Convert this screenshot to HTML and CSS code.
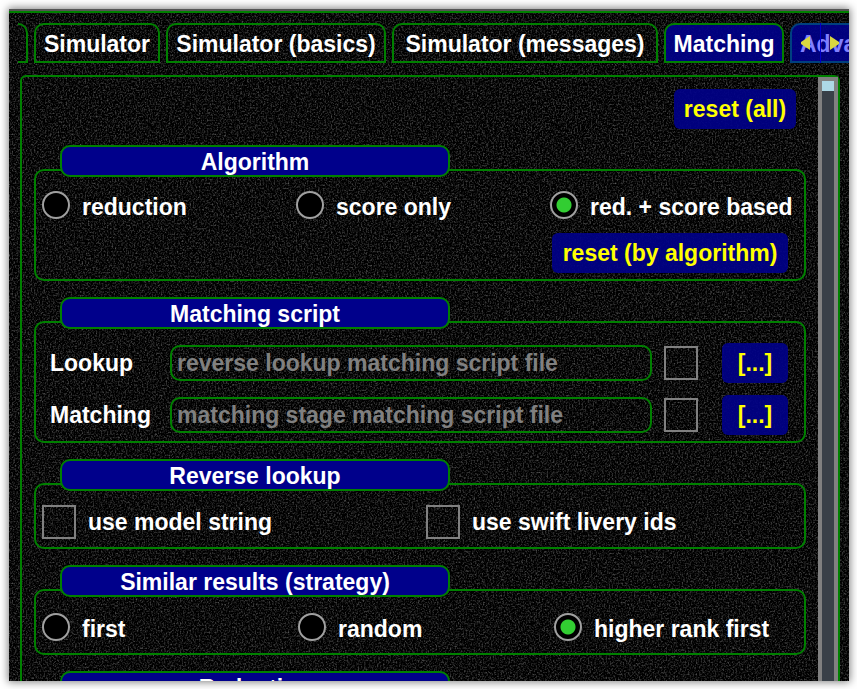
FILE: index.html
```
<!DOCTYPE html>
<html lang="en">
<head>
<meta charset="utf-8">
<title>Matching settings</title>
<link rel="stylesheet" href="styles.css">
</head>
<body>
<main class="window">
  <svg class="texture" aria-hidden="true">
    <filter id="grain" x="0" y="0" width="100%" height="100%" color-interpolation-filters="sRGB">
      <feTurbulence type="fractalNoise" baseFrequency="0.63 0.57" numOctaves="3" seed="4"/>
      <feColorMatrix values="0.7 0 0 0 -0.31  0.7 0 0 0 -0.31  0.7 0 0 0 -0.31  0 0 0 0 1"/>
    </filter>
    <rect width="100%" height="100%" filter="url(#grain)"/>
  </svg>
  <nav class="tabs">
    <span class="tab stub"></span>
    <button class="tab">Simulator</button>
    <button class="tab">Simulator (basics)</button>
    <button class="tab">Simulator (messages)</button>
    <button class="tab active">Matching</button>
    <button class="tab next">Advanced</button>
    <div class="scrollers">
      <button aria-label="Scroll tabs left"><svg viewBox="0 0 9 14"><path d="M9 0V14L0 8V6Z"/></svg></button>
      <button aria-label="Scroll tabs right"><svg viewBox="0 0 9 14"><path d="M0 0V14L9 8V6Z"/></svg></button>
    </div>
  </nav>
  <div class="panel">
    <div class="content">
      <div class="toolbar"><button class="btn">reset (all)</button></div>

      <section class="group">
        <h2>Algorithm</h2>
        <div class="box">
          <div class="options three">
            <label><input type="radio" name="algorithm">reduction</label>
            <label><input type="radio" name="algorithm">score only</label>
            <label><input type="radio" name="algorithm" checked>red. + score based</label>
          </div>
          <div class="actions"><button class="btn">reset (by algorithm)</button></div>
        </div>
      </section>

      <section class="group">
        <h2>Matching script</h2>
        <div class="box scripts">
          <div class="script">
            <label for="lookup">Lookup</label>
            <input type="text" id="lookup" placeholder="reverse lookup matching script file">
            <input type="checkbox" aria-label="Use lookup script">
            <button class="btn">[...]</button>
          </div>
          <div class="script">
            <label for="matching">Matching</label>
            <input type="text" id="matching" placeholder="matching stage matching script file">
            <input type="checkbox" aria-label="Use matching script">
            <button class="btn">[...]</button>
          </div>
        </div>
      </section>

      <section class="group">
        <h2>Reverse lookup</h2>
        <div class="box">
          <div class="options two">
            <label><input type="checkbox">use model string</label>
            <label><input type="checkbox">use swift livery ids</label>
          </div>
        </div>
      </section>

      <section class="group">
        <h2>Similar results (strategy)</h2>
        <div class="box">
          <div class="options strategy">
            <label><input type="radio" name="strategy">first</label>
            <label><input type="radio" name="strategy">random</label>
            <label><input type="radio" name="strategy" checked>higher rank first</label>
          </div>
        </div>
      </section>

      <section class="group">
        <h2>Reduction</h2>
        <div class="box"></div>
      </section>
    </div>
    <div class="scrollbar"><div class="thumb"></div></div>
  </div>
</main>
</body>
</html>
```
FILE: styles.css
```
* { box-sizing: border-box; }

body {
  margin: 0;
  height: 100vh;
  padding: 9px 8px 8px 9px;
  background: #fff;
  color: #fff;
  font: bold 23px/30px "Liberation Sans", Arial, sans-serif;
  overflow: hidden;
}

button, input {
  font: inherit;
  color: inherit;
  margin: 0;
}

.window {
  position: relative;
  isolation: isolate;
  display: flex;
  flex-direction: column;
  height: 100%;
  padding-top: 10px;
  border-top: 2px solid #555;
  background: #080808;
  box-shadow: 0 0 8px 1px rgba(0, 0, 0, 0.5);
}

.window::before {
  content: "";
  position: absolute;
  inset: 0 0 auto;
  height: 2px;
  background: #008000;
}

.texture {
  position: absolute;
  inset: 0;
  z-index: -1;
  width: 100%;
  height: 100%;
}

.tabs {
  position: relative;
  display: grid;
  grid-template-columns: 10px 126px 220px 266px 120px 126px;
  gap: 6px;
  flex: none;
  height: 40px;
  margin: 2px 0 12px 9px;
  overflow: hidden;
}

.tab {
  padding: 2px 0 0;
  border: 2px solid #008000;
  border-radius: 10px 10px 0 0;
  background: none;
  white-space: nowrap;
}

.tab.stub {
  border-left: 0;
  border-top-left-radius: 0;
}

.tab.active { background: rgba(0, 0, 139, 0.9); }

.tab.next {
  padding-left: 8px;
  border-color: #004080;
  background: rgba(0, 0, 139, 0.9);
  color: #8080ff;
  text-align: left;
}

.scrollers {
  position: absolute;
  inset: 0 0 0 auto;
  display: flex;
  width: 58px;
}

.scrollers button {
  flex: 1;
  display: grid;
  place-items: center;
  padding: 0;
  border: 0;
  background: none;
}

.scrollers button + button { border-left: 1px solid #0000c8; }

.scrollers svg {
  width: 9px;
  height: 14px;
  fill: #d8d840;
}

.panel {
  display: flex;
  flex: 1;
  min-height: 0;
  margin: 0 9px 0 11px;
  border: 2px solid #008000;
  border-bottom: 0;
  border-radius: 6px 6px 0 0;
}

.content {
  flex: 1;
  min-width: 0;
  padding: 12px 12px 0;
  overflow: hidden;
}

.scrollbar {
  flex: none;
  width: 20px;
  padding: 4px 4px 0;
  background: linear-gradient(#394048, #394048) content-box, #808080;
}

.thumb {
  height: 10px;
  background: #add8e6;
}

.btn {
  height: 40px;
  padding: 0;
  border: 0;
  border-radius: 6px;
  background: rgba(0, 0, 139, 0.9);
  color: #ff0;
  white-space: nowrap;
}

.toolbar {
  display: flex;
  justify-content: flex-end;
  padding-right: 10px;
}

.toolbar .btn { min-width: 122px; }

.group { margin-top: 16px; }

.group h2 {
  position: relative;
  width: calc(50% + 4px);
  height: 32px;
  margin: 0 0 -8px 26px;
  border: 2px solid #008000;
  border-radius: 10px;
  background: #00008b;
  font: inherit;
  text-align: center;
}

.box {
  display: grid;
  align-content: start;
  gap: 10px;
  min-height: 66px;
  padding: 20px 6px 6px;
  border: 2px solid #008000;
  border-radius: 10px;
}

.options label {
  display: flex;
  align-items: center;
  gap: 12px;
  min-height: 32px;
  white-space: nowrap;
}

.options {
  display: grid;
  gap: 6px;
}

.three { grid-template-columns: repeat(3, minmax(0, 1fr)); }

.two {
  grid-template-columns: repeat(2, minmax(0, 1fr));
  gap: 12px;
}

.strategy {
  grid-template-columns: 250fr 250fr 244fr;
  padding-top: 2px;
}

.actions {
  display: flex;
  justify-content: flex-end;
  padding-right: 10px;
}

.actions .btn { min-width: 236px; }

.scripts {
  gap: 12px;
  padding-left: 14px;
  padding-right: 16px;
}

.script {
  display: grid;
  grid-template-columns: 120px minmax(0, 1fr) 70px 66px;
  align-items: center;
}

.script input[type="checkbox"] { margin-left: 12px; }

input[type="text"] {
  width: 100%;
  height: 36px;
  padding: 0 5px;
  border: 2px solid #008000;
  border-radius: 10px;
  background: none;
}

input::placeholder {
  color: #808080;
  opacity: 1;
}

input[type="checkbox"] {
  appearance: none;
  flex: none;
  width: 34px;
  height: 34px;
  border: 2px solid #808080;
}

input[type="radio"] {
  appearance: none;
  flex: none;
  align-self: flex-start;
  width: 28px;
  height: 28px;
  border: 2px solid #a0a0a0;
  border-radius: 50%;
  background: #000;
}

input[type="radio"]:checked {
  background: radial-gradient(circle, #32cd32 7px, #000 8px);
}
```
